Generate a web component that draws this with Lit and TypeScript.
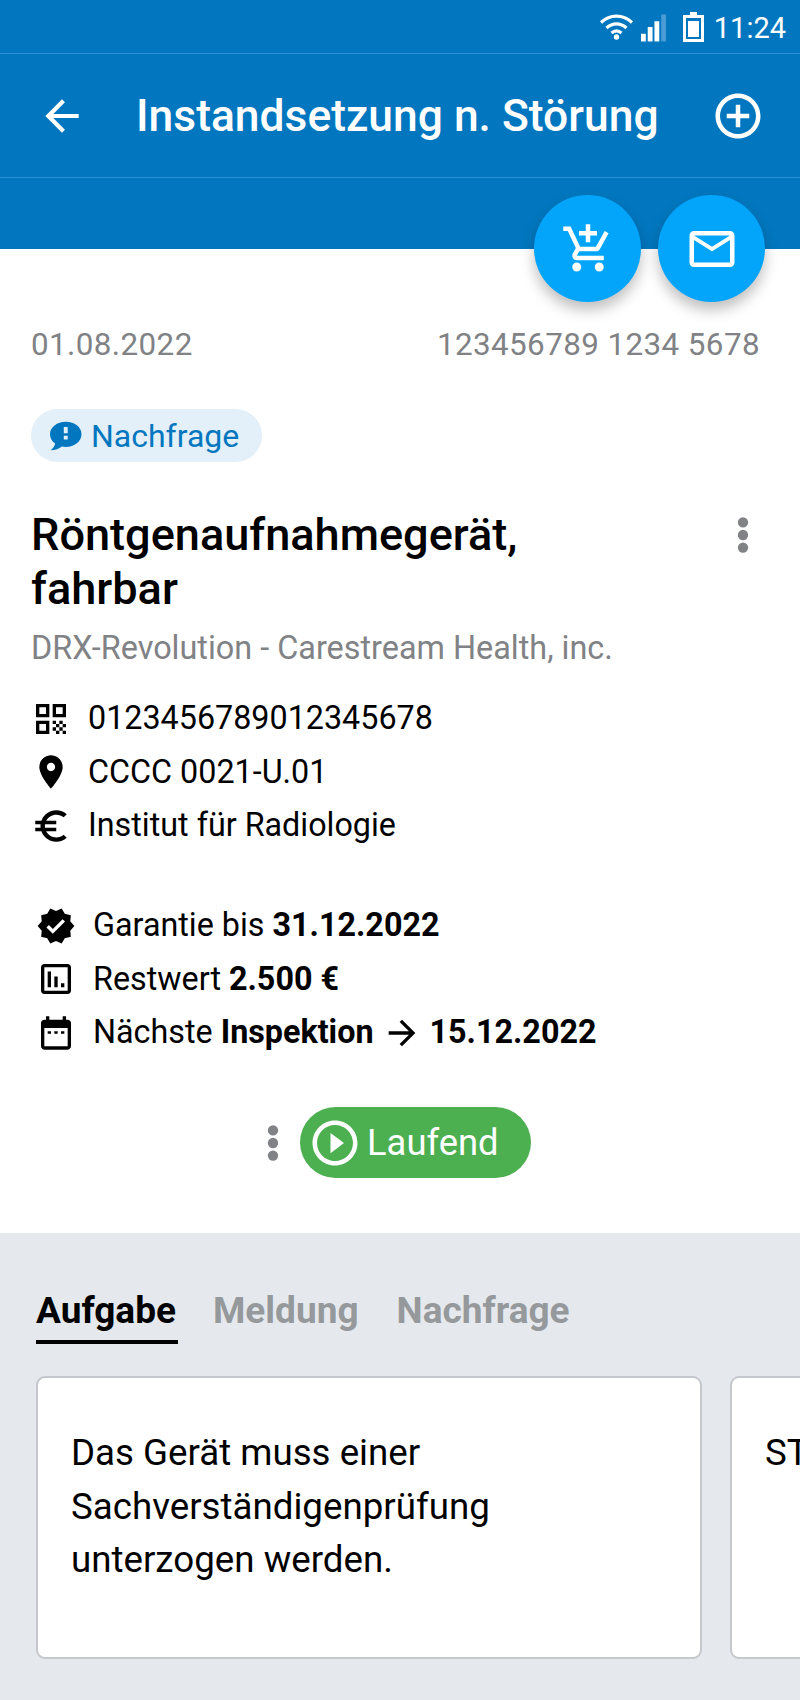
import { LitElement, html, css, svg } from 'lit'
import { customElement } from 'lit/decorators.js'

const icon = (d: string, cls = '') => html`<svg class="icon ${cls}" viewBox="0 0 24 24"><path fill-rule="evenodd" d=${d}></path></svg>`

const ICONS = {
  back: 'M20 11H7.83l5.59-5.59L12 4l-8 8 8 8 1.41-1.41L7.83 13H20v-2z',
  add: 'M13 7h-2v4H7v2h4v4h2v-4h4v-2h-4V7zm-1-5C6.48 2 2 6.48 2 12s4.48 10 10 10 10-4.48 10-10S17.52 2 12 2zm0 18c-4.41 0-8-3.59-8-8s3.59-8 8-8 8 3.59 8 8-3.59 8-8 8z',
  cart: 'M11 9h2V6h3V4h-3V1h-2v3H8v2h3v3zm-4 9c-1.1 0-1.99.9-1.99 2S5.9 22 7 22s2-.9 2-2-.9-2-2-2zm10 0c-1.1 0-1.99.9-1.99 2s.89 2 1.99 2 2-.9 2-2-.9-2-2-2zm-9.83-3.25l.03-.12.9-1.63h7.45c.75 0 1.41-.41 1.75-1.03l3.86-7.01L19.42 4h-.01l-1.1 2-2.76 5H8.53l-.13-.27L6.16 6l-.95-2-.94-2H1v2h2l3.6 7.59-1.35 2.45c-.16.28-.25.61-.25.96 0 1.1.9 2 2 2h12v-2H7.42c-.13 0-.25-.11-.25-.25z',
  mail: 'M20 4H4c-1.1 0-1.99.9-1.99 2L2 18c0 1.1.9 2 2 2h16c1.1 0 2-.9 2-2V6c0-1.1-.9-2-2-2zm0 14H4V8l8 5 8-5v10zm-8-7L4 6h16l-8 5z',
  bubble: 'M12.500 2.500C6.700 2.500 2 6.200 2 10.800c0 2.500 1.300 4.700 3.400 6.200-.2 1.500-1.200 3-2.900 4.500 3-.1 5.600-1 7.400-2.500.8.200 1.700.300 2.600.300 5.800 0 10.500-3.700 10.500-8.500s-4.700-8.300-10.500-8.300zm1.300 11.800h-2.600v-2.500h2.600v2.500zm0-4.200h-2.600V6h2.600v4.100z',
  qr: 'M3 11h8V3H3v8zm2-6h4v4H5V5zM3 21h8v-8H3v8zm2-6h4v4H5v-4zM13 3v8h8V3h-8zm6 6h-4V5h4v4zM19 19h2v2h-2zM13 13h2v2h-2zM15 15h2v2h-2zM13 17h2v2h-2zM15 19h2v2h-2zM17 17h2v2h-2zM17 13h2v2h-2zM19 15h2v2h-2z',
  place: 'M12 2C8.130 2 5 5.130 5 9c0 5.250 7 13 7 13s7-7.750 7-13c0-3.870-3.130-7-7-7zm0 9.500c-1.380 0-2.500-1.120-2.500-2.500s1.120-2.500 2.500-2.500 2.500 1.120 2.500 2.500-1.120 2.500-2.500 2.500z',
  euro: 'M15 18.5c-2.51 0-4.68-1.42-5.76-3.5H15v-2H8.58c-.05-.33-.08-.66-.08-1s.03-.67.08-1H15V9H9.24C10.32 6.92 12.5 5.5 15 5.5c1.61 0 3.09.59 4.23 1.57L21 5.3C19.41 3.87 17.3 3 15 3c-3.92 0-7.24 2.51-8.48 6H3v2h3.06c-.04.33-.06.66-.06 1s.02.67.06 1H3v2h3.52c1.24 3.49 4.56 6 8.48 6 2.31 0 4.41-.87 6-2.3l-1.78-1.77c-1.13.98-2.6 1.57-4.22 1.57z',
  verified: 'M23 12l-2.44-2.79.34-3.69-3.61-.82-1.89-3.2L12 2.96 8.6 1.5 6.71 4.69 3.1 5.5l.34 3.7L1 12l2.44 2.79-.34 3.7 3.61.82L8.6 22.5l3.4-1.47 3.4 1.46 1.89-3.19 3.61-.82-.34-3.69L23 12zm-12.91 4.72l-3.8-3.81 1.48-1.48 2.32 2.33 5.85-5.87 1.48 1.48-7.33 7.35z',
  chart: 'M19 3H5c-1.1 0-2 .9-2 2v14c0 1.1.9 2 2 2h14c1.1 0 2-.9 2-2V5c0-1.1-.9-2-2-2zm0 16H5V5h14v14zM7 7.500h2V17H7zm4 3h2V17h-2zm4 4h2V17h-2z',
  calendar: 'M19 4h-1V2h-2v2H8V2H6v2H5c-1.11 0-2 .9-2 2v14c0 1.1.89 2 2 2h14c1.1 0 2-.9 2-2V6c0-1.1-.9-2-2-2zm0 16H5V9h14v11zM7 11h2v1.500H7zm4 0h2v1.500h-2zm4 0h2v1.500h-2z',
  arrow: 'M12 4l-1.410 1.410L16.170 11H4v2h12.170l-5.580 5.590L12 20l8-8z',
  play: 'M10 16.5l6-4.5-6-4.5v9zM12 2C6.48 2 2 6.48 2 12s4.48 10 10 10 10-4.48 10-10S17.52 2 12 2zm0 18c-4.41 0-8-3.59-8-8s3.59-8 8-8 8 3.59 8 8-3.59 8-8 8z',
}

const dots = html`<svg class="dots" viewBox="0 0 10 30"><circle cx="5" cy="4.500" r="4.300"></circle><circle cx="5" cy="15" r="4.300"></circle><circle cx="5" cy="25.500" r="4.300"></circle></svg>`

const wifi = svg`<g fill="none" stroke="#fff" stroke-width="3.200"><path d="M2 10.500c9-8.500 22-8.500 31 0"></path><path d="M7.500 16c6-5.500 14-5.500 20 0"></path><path d="M12.500 21c3.500-3 6.500-3 10 0"></path></g><circle cx="17.500" cy="25" r="2.700" fill="#fff"></circle>`

@customElement('app-root')
export class AppRoot extends LitElement {
  static styles = css`
    :host {
      display: block;
      width: 800px;
      height: 1700px;
      overflow: hidden;
      background: #e5e9ed;
      font-family: Roboto, 'Noto Sans', sans-serif;
      color: #000;
    }
    .icon { fill: currentColor; display: block; flex: none; }
    .dots { fill: #808285; display: block; width: 12px; height: 36px; flex: none; }

    .top { background: #0277bf; color: #fff; height: 249px; position: relative; }
    .status {
      height: 54px;
      box-sizing: border-box;
      border-bottom: 1px solid #2d8fd6;
      display: flex;
      justify-content: flex-end;
      align-items: center;
      padding: 2px 14px 0 0;
    }
    .status .wifi { width: 35px; height: 28px; margin-top: -3px; }
    .status .signal { width: 25px; height: 28px; margin: 0 17px 0 7px; }
    .status .battery { width: 21px; height: 30px; margin-right: 10px; margin-top: -2px; }
    .status .time { font-size: 29px; line-height: 34px; }
    .bar {
      height: 124px;
      box-sizing: border-box;
      border-bottom: 1px solid #2d8fd6;
      display: flex;
      align-items: center;
      padding: 0 35px 0 37px;
    }
    .bar .back { width: 50px; height: 50px; }
    .bar .title { font-size: 44.400px; font-weight: 500; margin-left: 49px; flex: 1; white-space: nowrap; }
    .bar .add { width: 54px; height: 54px; }
    .fabs { position: absolute; top: 195px; right: 35px; display: flex; gap: 17px; }
    .fab {
      width: 107px;
      height: 107px;
      border-radius: 50%;
      background: #03a5fb;
      display: flex;
      align-items: center;
      justify-content: center;
      box-shadow: 0 8px 14px rgba(0, 0, 0, 0.25);
    }
    .fab svg { width: 54px; height: 54px; }

    .main { background: #fff; height: 984px; box-sizing: border-box; padding: 78px 40px 0 31px; }
    .meta { display: flex; justify-content: space-between; font-size: 31.400px; line-height: 36px; color: #808285; letter-spacing: 0.4px; }
    .chip {
      display: inline-flex;
      align-items: center;
      height: 53px;
      margin-top: 46px;
      padding: 0 23px 0 16px;
      border-radius: 27px;
      background: #e3f0f9;
      color: #0277bf;
      font-size: 32px;
      gap: 8px;
    }
    .chip svg { width: 36px; height: 36px; }
    .head { display: flex; justify-content: space-between; margin-top: 46px; }
    h1 { margin: 0; font-size: 45.100px; line-height: 54px; font-weight: 500; }
    .head .dots { margin: 9px 11px 0 0; }
    .sub { font-size: 32.400px; line-height: 54px; color: #808285; margin-top: 5px; }
    .rows { display: flex; flex-direction: column; font-size: 32.300px; line-height: 53.500px; margin-top: 17px; }
    .row { display: flex; align-items: center; gap: 17px; white-space: pre; }
    .row svg { width: 40px; height: 40px; }
    .row .euro { width: 42px; height: 42px; margin: 0 -1px; }
    .rows.second { margin-top: 46.500px; margin-left: 5px; }
    .next { display: inline-flex; align-items: center; }
    .next svg { margin: 0 8px; }
    b { font-weight: 700; }

    .state { display: flex; justify-content: center; align-items: center; gap: 21px; margin-top: 47.500px; margin-left: 7px; }
    .pill {
      display: flex;
      align-items: center;
      gap: 5px;
      height: 71px;
      width: 231px;
      box-sizing: border-box;
      padding-left: 8px;
      border-radius: 36px;
      background: #4caf50;
      color: #fff;
      font-size: 36.400px;
    }
    .pill svg { width: 54px; height: 54px; }

    .lower { padding: 0 0 0 36px; overflow: hidden; }
    .tabs { display: flex; gap: 35px; padding-top: 58px; font-size: 37px; font-weight: 700; color: #96999c; }
    .tab { line-height: 40px; height: 53px; }
    .tab.active { color: #000; border-bottom: 4px solid #000; padding-right: 2px; height: 49px; }
    .tab + .tab + .tab { margin-left: 3px; }
    .cards { display: flex; gap: 28px; margin-top: 32px; }
    .card {
      flex: none;
      width: 666px;
      height: 283px;
      box-sizing: border-box;
      background: #fff;
      border: 2px solid #c4c8cc;
      border-radius: 9px;
      padding: 48px 33px 0;
      font-size: 36.700px;
      line-height: 53.500px;
    }
  `

  render() {
    return html`
      <div class="top">
        <div class="status">
          <svg class="wifi" viewBox="0 0 35 28">${wifi}</svg>
          <svg class="signal" viewBox="0 0 26 28">
            <rect x="0" y="20" width="5" height="8" fill="#fff"></rect>
            <rect x="7" y="13" width="5" height="15" fill="#fff"></rect>
            <rect x="14" y="7" width="5" height="21" fill="#fff"></rect>
            <rect x="21" y="0" width="5" height="28" fill="#4a9bd6"></rect>
          </svg>
          <svg class="battery" viewBox="0 0 21 30">
            <path fill="#fff" fill-rule="evenodd" d="M7 0h7v3h7v27H0V3h7zM3 6v21h15V6z"></path>
            <rect x="5" y="9" width="11" height="16" fill="#fff"></rect>
          </svg>
          <span class="time">11:24</span>
        </div>
        <div class="bar">
          ${icon(ICONS.back, 'back')}
          <span class="title">Instandsetzung n. Störung</span>
          ${icon(ICONS.add, 'add')}
        </div>
        <div class="fabs">
          <div class="fab">${icon(ICONS.cart)}</div>
          <div class="fab">${icon(ICONS.mail)}</div>
        </div>
      </div>

      <div class="main">
        <div class="meta"><span>01.08.2022</span><span>123456789 1234 5678</span></div>
        <div class="chip">${icon(ICONS.bubble)}<span>Nachfrage</span></div>
        <div class="head">
          <h1>Röntgenaufnahmegerät,<br />fahrbar</h1>
          ${dots}
        </div>
        <div class="sub">DRX-Revolution - Carestream Health, inc.</div>
        <div class="rows">
          <div class="row">${icon(ICONS.qr)}<span>0123456789012345678</span></div>
          <div class="row">${icon(ICONS.place)}<span>CCCC 0021-U.01</span></div>
          <div class="row">${icon(ICONS.euro, 'euro')}<span>Institut für Radiologie</span></div>
        </div>
        <div class="rows second">
          <div class="row">${icon(ICONS.verified)}<span>Garantie bis <b>31.12.2022</b></span></div>
          <div class="row">${icon(ICONS.chart)}<span>Restwert <b>2.500 €</b></span></div>
          <div class="row">${icon(ICONS.calendar)}<span class="next">Nächste <b>Inspektion</b>${icon(ICONS.arrow)}<b>15.12.2022</b></span></div>
        </div>
        <div class="state">
          ${dots}
          <div class="pill">${icon(ICONS.play)}<span>Laufend</span></div>
        </div>
      </div>

      <div class="lower">
        <div class="tabs">
          <div class="tab active">Aufgabe</div>
          <div class="tab">Meldung</div>
          <div class="tab">Nachfrage</div>
        </div>
        <div class="cards">
          <div class="card">Das Gerät muss einer<br />Sachverständigenprüfung<br />unterzogen werden.</div>
          <div class="card">ST</div>
        </div>
      </div>
    `
  }
}
